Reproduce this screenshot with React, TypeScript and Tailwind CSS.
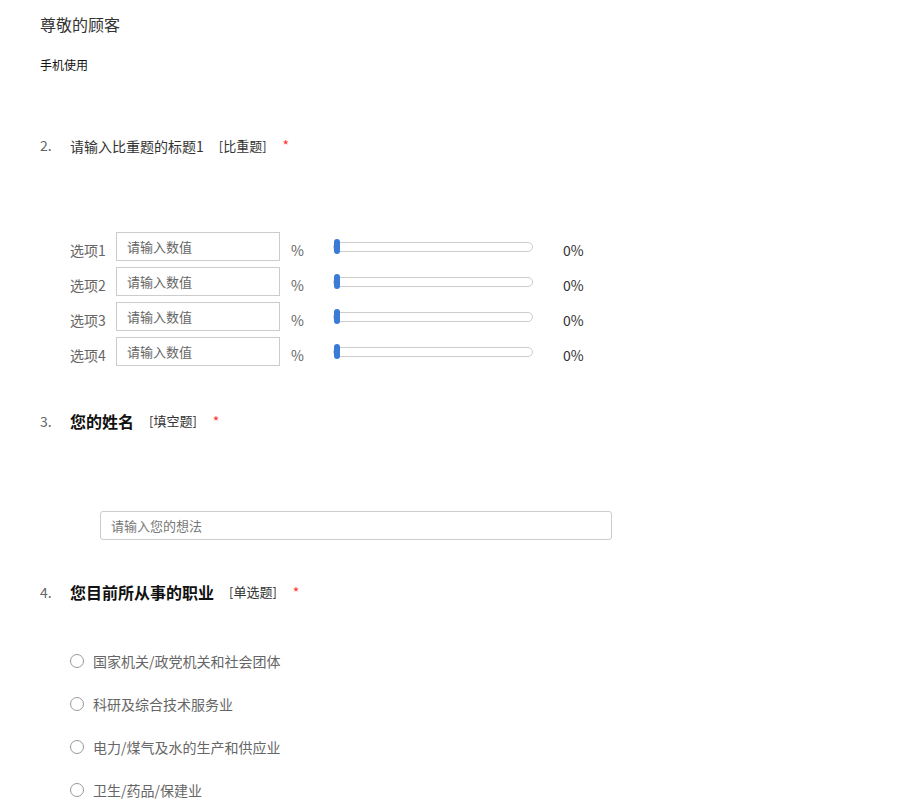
const font = { fontFamily: '"Noto Sans CJK SC", "Noto Sans", sans-serif' }

const ratioRows = ['选项1', '选项2', '选项3', '选项4']
const jobs = ['国家机关/政党机关和社会团体', '科研及综合技术服务业', '电力/煤气及水的生产和供应业', '卫生/药品/保建业']

function QuestionTitle({ num, title, kind, bold }: { num: string; title: string; kind: string; bold?: boolean }) {
  return (
    <div className="flex items-center">
      <span className="w-[30px] text-[14px] text-[#666]">{num}</span>
      <span className={bold ? 'text-[16px] font-bold text-[#111] leading-[22px]' : 'text-[14px] text-[#333] leading-[20px]'}>{title}</span>
      <span className="ml-[15px] text-[13px] text-[#333]">{kind}</span>
      <span className="ml-[16px] text-[14px] text-[#f33]">*</span>
    </div>
  )
}

export default function App() {
  return (
    <div className="min-h-[800px] bg-white px-[40px] pt-[13px]" style={font}>
      <div className="text-[16px] leading-[22px] text-[#333]">尊敬的顾客</div>
      <div className="mt-[21px] text-[12px] leading-[18px] text-[#111]">手机使用</div>

      <div className="mt-[61px]">
        <QuestionTitle num="2." title="请输入比重题的标题1" kind="[比重题]" />
      </div>
      <div className="mt-[76px] flex flex-col gap-[6px] pl-[30px]">
        {ratioRows.map((r) => (
          <div key={r} className="flex h-[29px] items-center">
            <span className="mt-[8px] w-[46px] text-[14px] text-[#666]">{r}</span>
            <div className="flex h-[29px] w-[164px] items-center border border-[#ccc] pl-[10px] text-[13px] text-[#666]">请输入数值</div>
            <span className="mt-[8px] ml-[11px] w-[42px] text-[14px] text-[#666]">%</span>
            <div className="relative h-[10px] w-[200px] rounded-full border border-[#ccc]">
              <div className="absolute left-0 top-[-4px] h-[15px] w-[6px] rounded-full bg-[#3a7bd5]" />
            </div>
            <span className="mt-[8px] ml-[30px] text-[14px] text-[#333]">0%</span>
          </div>
        ))}
      </div>

      <div className="mt-[44px]">
        <QuestionTitle num="3." title="您的姓名" kind="[填空题]" bold />
      </div>
      <div className="mt-[79px] pl-[60px]">
        <div className="flex h-[29px] w-[512px] items-center rounded-[3px] border border-[#ccc] pl-[10px] text-[13px] text-[#777]">请输入您的想法</div>
      </div>

      <div className="mt-[41px]">
        <QuestionTitle num="4." title="您目前所从事的职业" kind="[单选题]" bold />
      </div>
      <div className="mt-[48px] flex flex-col gap-[23px] pl-[30px]">
        {jobs.map((j) => (
          <div key={j} className="flex h-[20px] items-center">
            <span className="h-[14px] w-[14px] rounded-full border border-[#999]" />
            <span className="ml-[9px] text-[14px] text-[#666]">{j}</span>
          </div>
        ))}
      </div>
    </div>
  )
}
